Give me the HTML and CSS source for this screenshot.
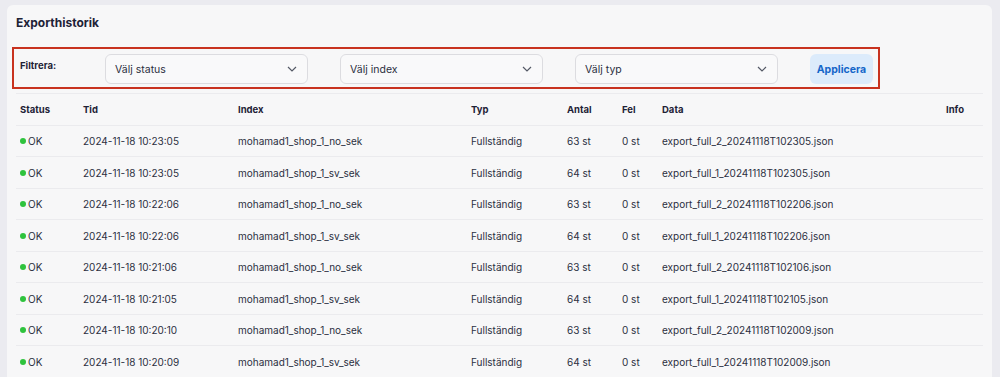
FILE: index.html
```html
<!DOCTYPE html>
<html lang="sv">
<head>
<meta charset="utf-8">
<link rel="stylesheet" href="styles.css">
<title>Exporthistorik</title>
</head>
<body>
<div class="card">
  <h1 class="title">Exporthistorik</h1>
  <div class="filters">
    <span class="filter-label">Filtrera:</span>
    <div class="select"><span>Välj status</span><svg viewBox="0 0 12 12" class="chev"><path d="M2 4l4 4 4-4"/></svg></div>
    <div class="select"><span>Välj index</span><svg viewBox="0 0 12 12" class="chev"><path d="M2 4l4 4 4-4"/></svg></div>
    <div class="select"><span>Välj typ</span><svg viewBox="0 0 12 12" class="chev"><path d="M2 4l4 4 4-4"/></svg></div>
    <button class="apply">Applicera</button>
  </div>
  <div class="table">
    <div class="row head">
      <div>Status</div><div>Tid</div><div>Index</div><div>Typ</div><div>Antal</div><div>Fel</div><div>Data</div><div>Info</div>
    </div>
    <div class="row"><div class="ok"><i class="dot"></i>OK</div><div>2024-11-18 10:23:05</div><div>mohamad1_shop_1_no_sek</div><div>Fullständig</div><div>63 st</div><div>0 st</div><div>export_full_2_20241118T102305.json</div><div></div></div>
    <div class="row"><div class="ok"><i class="dot"></i>OK</div><div>2024-11-18 10:23:05</div><div>mohamad1_shop_1_sv_sek</div><div>Fullständig</div><div>64 st</div><div>0 st</div><div>export_full_1_20241118T102305.json</div><div></div></div>
    <div class="row"><div class="ok"><i class="dot"></i>OK</div><div>2024-11-18 10:22:06</div><div>mohamad1_shop_1_no_sek</div><div>Fullständig</div><div>63 st</div><div>0 st</div><div>export_full_2_20241118T102206.json</div><div></div></div>
    <div class="row"><div class="ok"><i class="dot"></i>OK</div><div>2024-11-18 10:22:06</div><div>mohamad1_shop_1_sv_sek</div><div>Fullständig</div><div>64 st</div><div>0 st</div><div>export_full_1_20241118T102206.json</div><div></div></div>
    <div class="row"><div class="ok"><i class="dot"></i>OK</div><div>2024-11-18 10:21:06</div><div>mohamad1_shop_1_no_sek</div><div>Fullständig</div><div>63 st</div><div>0 st</div><div>export_full_2_20241118T102106.json</div><div></div></div>
    <div class="row"><div class="ok"><i class="dot"></i>OK</div><div>2024-11-18 10:21:05</div><div>mohamad1_shop_1_sv_sek</div><div>Fullständig</div><div>64 st</div><div>0 st</div><div>export_full_1_20241118T102105.json</div><div></div></div>
    <div class="row"><div class="ok"><i class="dot"></i>OK</div><div>2024-11-18 10:20:10</div><div>mohamad1_shop_1_no_sek</div><div>Fullständig</div><div>63 st</div><div>0 st</div><div>export_full_2_20241118T102009.json</div><div></div></div>
    <div class="row"><div class="ok"><i class="dot"></i>OK</div><div>2024-11-18 10:20:09</div><div>mohamad1_shop_1_sv_sek</div><div>Fullständig</div><div>64 st</div><div>0 st</div><div>export_full_1_20241118T102009.json</div><div></div></div>
  </div>
</div>
</body>
</html>
```
FILE: styles.css
```css
* { box-sizing: border-box; }
html, body { margin: 0; height: 100%; }
body {
  background: #ebebf0;
  font-family: "Inter", "Noto Sans", sans-serif;
  color: #2b2f3f;
  font-size: 10px;
  padding: 5px 8px 0 7px;
  overflow: hidden;
}
.card {
  background: #f7f7f8;
  border-radius: 6px 6px 0 0;
  padding: 13px 9px 0 5px;
  height: 100%;
  overflow: hidden;
}
.title {
  margin: 0 0 0 4px;
  font-size: 12px;
  font-weight: 700;
  color: #1e2236;
  line-height: 10px;
}
.filters {
  margin-top: 19px;
  width: 868px;
  height: 42px;
  border: 2px solid #c8321f;
  display: flex;
  align-items: flex-start;
  padding: 5px 0 0 6px;
  gap: 32px;
}
.filter-label {
  font-weight: 700;
  font-size: 9.5px;
  color: #1e2236;
  width: 53px;
  margin-top: 6px;
  margin-right: 0;
}
.select {
  width: 203px;
  height: 30px;
  border: 1px solid #dcdce0;
  border-radius: 6px;
  background: #f9f9fa;
  display: flex;
  align-items: center;
  justify-content: space-between;
  padding: 0 9px 0 9px;
  color: #2b2f3f;
  font-size: 10.5px;
}
.chev { width: 12px; height: 12px; fill: none; stroke: #555a66; stroke-width: 1.2; }
.apply {
  width: 63px;
  height: 30px;
  border: 0;
  border-radius: 6px;
  background: #dcebfb;
  color: #1566c9;
  font-family: inherit;
  font-weight: 700;
  font-size: 10.5px;
  padding: 0;
}
.table {
  margin-top: 4px;
  width: 967px;
  margin-left: 4px;
  border-top: 1px solid #ebebee;
}
.row {
  display: grid;
  grid-template-columns: 63px 155px 233px 96px 55px 40px 284px 41px;
  height: 31.5px;
  align-items: center;
  padding-top: 1px;
  border-bottom: 1px solid #ebebee;
}
.row > div { padding-left: 4px; white-space: nowrap; }
.head { font-weight: 700; color: #1e2236; font-size: 9.5px; }
.ok { display: flex; align-items: center; }
.dot {
  display: inline-block;
  width: 6px; height: 6px;
  border-radius: 50%;
  background: #2fc33d;
  margin-right: 2px;
}
```
